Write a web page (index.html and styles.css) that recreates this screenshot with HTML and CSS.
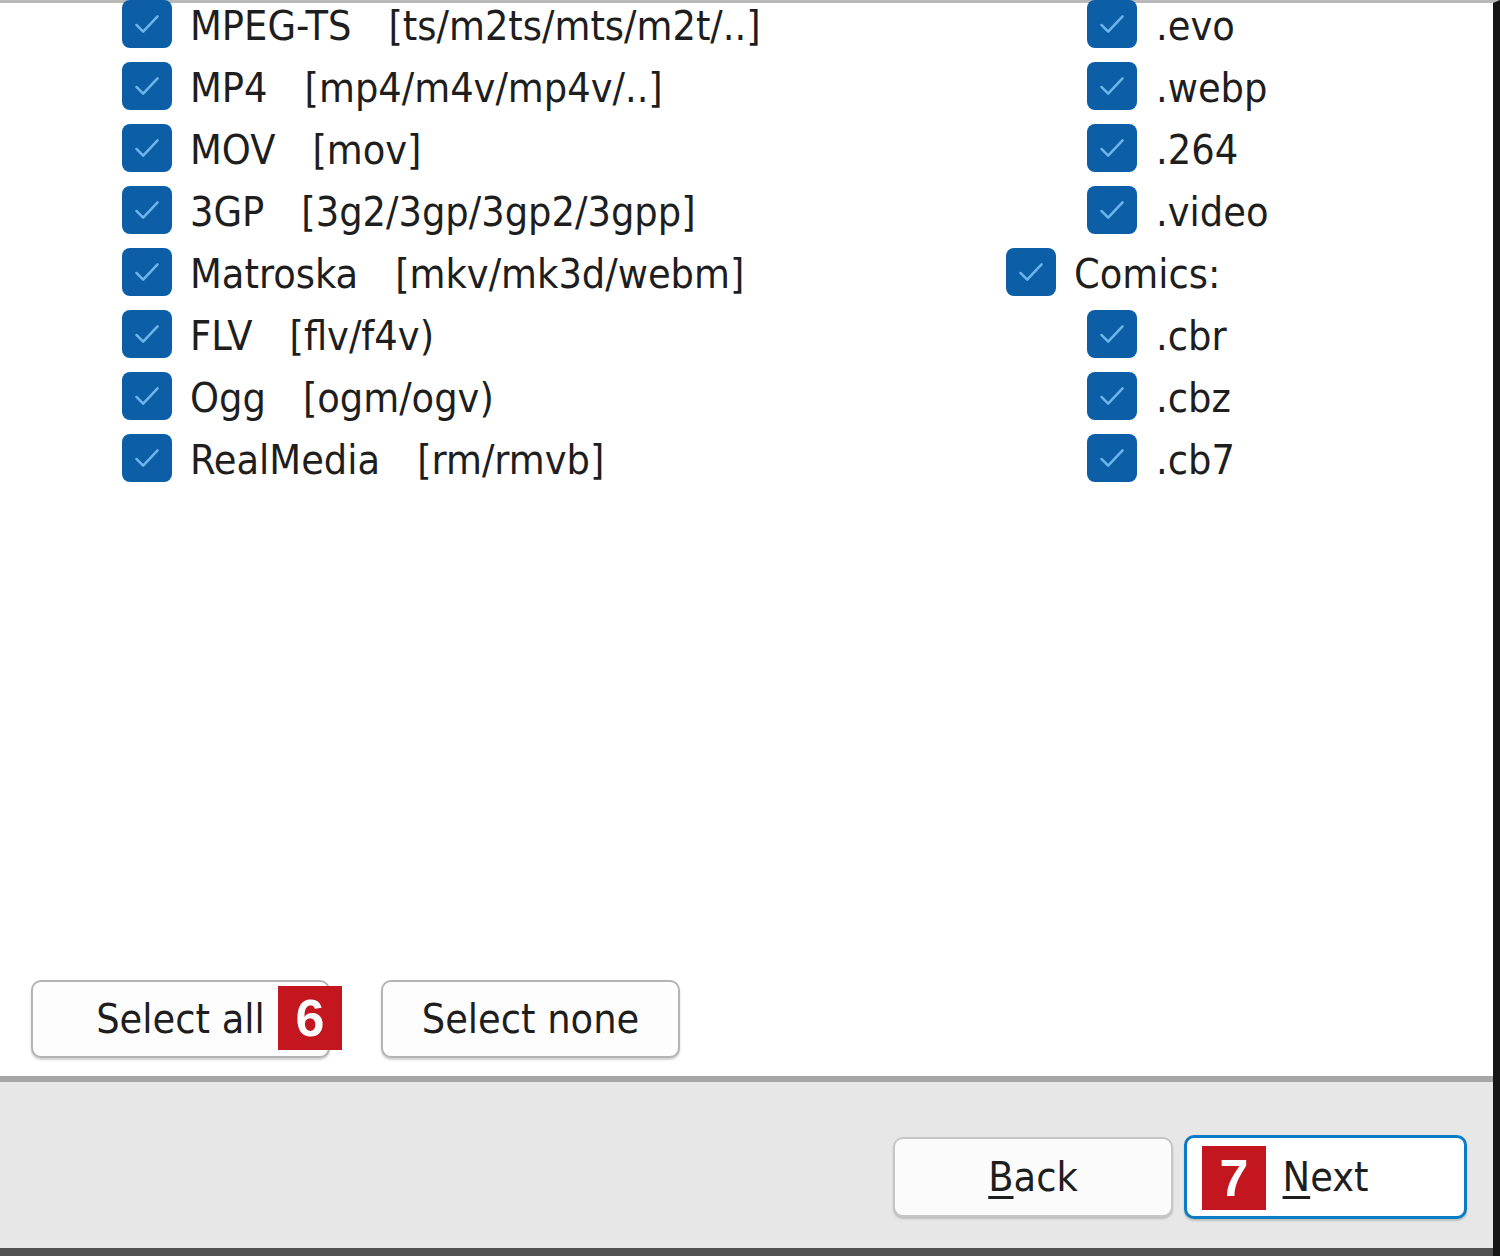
FILE: index.html
```html
<!DOCTYPE html>
<html>
<head>
  <title>Select file types</title>
  <link rel="stylesheet" href="styles.css">
</head>
<body>
  <div class="dialog">
    <div class="content">
      <div class="formats">
        <div class="col col-left">
          <div class="item"><span class="box"></span><span class="name">MPEG-TS</span><span class="ext">[ts/m2ts/mts/m2t/..]</span></div>
          <div class="item"><span class="box"></span><span class="name">MP4</span><span class="ext">[mp4/m4v/mp4v/..]</span></div>
          <div class="item"><span class="box"></span><span class="name">MOV</span><span class="ext">[mov]</span></div>
          <div class="item"><span class="box"></span><span class="name">3GP</span><span class="ext">[3g2/3gp/3gp2/3gpp]</span></div>
          <div class="item"><span class="box"></span><span class="name">Matroska</span><span class="ext">[mkv/mk3d/webm]</span></div>
          <div class="item"><span class="box"></span><span class="name">FLV</span><span class="ext">[flv/f4v)</span></div>
          <div class="item"><span class="box"></span><span class="name">Ogg</span><span class="ext">[ogm/ogv)</span></div>
          <div class="item"><span class="box"></span><span class="name">RealMedia</span><span class="ext">[rm/rmvb]</span></div>
        </div>
        <div class="col col-right">
          <div class="item sub"><span class="box"></span><span class="name">.evo</span></div>
          <div class="item sub"><span class="box"></span><span class="name">.webp</span></div>
          <div class="item sub"><span class="box"></span><span class="name">.264</span></div>
          <div class="item sub"><span class="box"></span><span class="name">.video</span></div>
          <div class="item group"><span class="box"></span><span class="name">Comics:</span></div>
          <div class="item sub"><span class="box"></span><span class="name">.cbr</span></div>
          <div class="item sub"><span class="box"></span><span class="name">.cbz</span></div>
          <div class="item sub"><span class="box"></span><span class="name">.cb7</span></div>
        </div>
      </div>

      <div class="actions">
        <button class="btn">Select all<span class="badge badge-6">6</span></button>
        <button class="btn">Select none</button>
      </div>
    </div>

    <div class="footer">
      <button class="btn btn-nav"><u>B</u>ack</button>
      <button class="btn btn-nav btn-default"><span class="badge badge-7">7</span><u>N</u>ext</button>
    </div>
  </div>

  <script>
    // draw the check mark into every box
    const check = '<svg viewBox="0 0 50 50" width="50" height="48"><path d="M14 26 L21 33 L36 17" fill="none" stroke="#6cb6ea" stroke-width="2.6" stroke-linecap="round" stroke-linejoin="round"/></svg>';
    document.querySelectorAll('.box').forEach(function(box) {
      box.innerHTML = check;
    });
  </script>
</body>
</html>
```

FILE: styles.css
```css
body {
  margin: 0;
  width: 1500px;
  height: 1256px;
  overflow: hidden;
  background-color: #fff;
  font-family: "DejaVu Sans Condensed", "DejaVu Sans", sans-serif;
  font-stretch: condensed;
  font-size: 41px;
  color: #1e1e1e;
}

.dialog {
  height: 1256px;
  box-sizing: border-box;
  border-top: 3px solid #b9b9b9;
  border-right: 7px solid #161616;
  display: flex;
  flex-direction: column;
}

.content {
  height: 1073px;
  display: flex;
  flex-direction: column;
  justify-content: space-between;
  background-color: #fff;
}

.formats {
  display: flex;
  margin-top: -10px;
  padding-left: 122px;
}

.col-left {
  width: 884px;
}

.item {
  display: flex;
  align-items: center;
  height: 62px;
  white-space: nowrap;
}

.item .name,
.item .ext {
  padding-top: 3px;
}

.item.sub {
  margin-left: 81px;
}

.box {
  width: 50px;
  height: 48px;
  border-radius: 8px;
  background-color: #0c5ea6;
  flex-shrink: 0;
  margin-right: 18px;
}

.box svg {
  display: block;
}

.item.sub .box {
  margin-right: 19px;
}

.ext {
  margin-left: 37px;
}

.actions {
  display: flex;
  gap: 51px;
  padding-left: 31px;
  padding-bottom: 18px;
}

.btn {
  position: relative;
  width: 299px;
  height: 78px;
  padding: 0;
  border: 2px solid #b4b4b4;
  border-radius: 10px;
  background-color: #fdfdfd;
  box-shadow: 0 2px 2px rgba(0, 0, 0, 0.18);
  font-family: inherit;
  font-stretch: condensed;
  font-size: 41px;
  color: #1e1e1e;
}

.btn u {
  text-decoration-thickness: 3px;
  text-underline-offset: 5px;
}

.badge {
  position: absolute;
  width: 64px;
  height: 64px;
  background-color: #c4161f;
  color: #fff;
  font-family: "Liberation Sans", Arial, sans-serif;
  font-stretch: normal;
  font-weight: bold;
  font-size: 52px;
  line-height: 64px;
  text-align: center;
}

.badge-6 {
  top: 4px;
  right: -14px;
}

.badge-7 {
  top: 8px;
  left: 15px;
}

.footer {
  flex: 1;
  display: flex;
  justify-content: flex-end;
  align-items: flex-start;
  gap: 11px;
  padding-top: 53px;
  padding-right: 26px;
  background-color: #e7e7e7;
  border-top: 6px solid #a6a6a6;
  border-bottom: 8px solid #505050;
}

.btn-nav {
  width: 280px;
  height: 80px;
  margin-top: 2px;
  border-color: #c6c6c6;
  background-color: #fbfbfb;
}

.btn-default {
  width: 283px;
  height: 84px;
  margin-top: 0;
  border: 3px solid #0a7cc6;
  background-color: #fff;
}
```
